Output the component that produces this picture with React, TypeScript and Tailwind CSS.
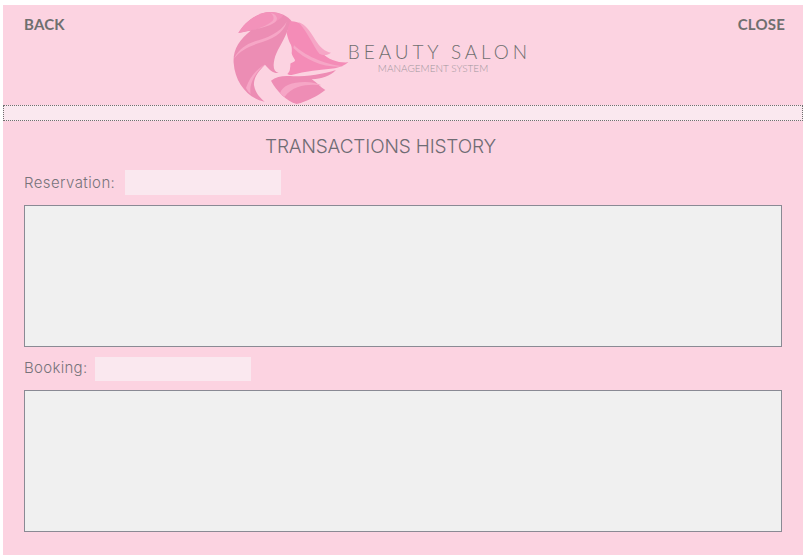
import React from 'react'

const font = { fontFamily: '"Inter", "Liberation Sans", sans-serif' }
const lato = { fontFamily: '"Lato", "Liberation Sans", sans-serif' }

// Logo drawing, woman's head with flowing hair
const SalonLogo: React.FC = () => (
  <svg width="125" height="100" viewBox="0 0 375 300" className="block shrink-0">
    {/* left side of the hair */}
    <path d="M25 75 C45 40 85 12 122 12 C150 12 175 25 185 40 L170 74 C160 100 138 130 133 155 C128 178 132 192 146 195 C128 196 118 185 105 170 C85 190 70 210 72 232 C76 255 90 270 104 281 C55 272 15 225 11 165 C8 125 28 95 62 68 C48 70 35 73 25 75 Z" fill="#ec8db4" />
    <path d="M25 75 C45 40 85 12 122 12 C135 12 150 16 160 22 C140 50 85 62 25 75 Z" fill="#f392ba" />
    <path d="M122 14 C136 18 146 28 138 40 C126 54 85 62 50 70 C85 62 114 52 128 38 C134 30 130 22 122 14 Z" fill="#f6a6c6" />
    <path d="M170 42 C150 75 110 90 75 100 C50 108 25 125 12 152 C30 128 55 116 85 106 C125 94 160 78 170 42 Z" fill="#f6a6c6" />
    <path d="M106 168 C82 182 60 205 48 240 C52 248 57 254 62 258 C58 238 64 205 106 168 Z" fill="#f6a6c6" />
    {/* right side, blown out */}
    <path d="M180 40 C200 38 222 48 236 70 C250 95 262 118 276 134 C295 155 325 165 355 163 C345 172 330 178 315 181 C270 186 225 190 185 201 C180 202 176 200 172 198 C178 192 180 188 180 181 C182 175 180 170 182 166 C190 162 196 160 195 156 C190 148 186 142 185 136 C186 128 186 118 183 111 C176 98 172 86 170 74 Z" fill="#f48cb7" />
    <path d="M205 42 C228 50 242 72 256 96 C270 118 285 131 303 134 C292 143 278 142 268 137 C250 115 235 75 205 42 Z" fill="#f6a6c6" />
    <path d="M192 112 C222 140 280 170 340 175 C290 181 230 160 190 120 Z" fill="#f6a6c6" />
    {/* lower curl */}
    <path d="M123 218 C140 204 165 202 190 205 C235 205 280 198 318 186 C300 205 275 212 245 214 C262 225 272 238 286 246 C262 265 232 280 200 288 C170 280 140 250 123 218 Z" fill="#ee8db5" />
    <path d="M150 256 C158 232 185 222 225 222 C245 222 262 226 275 232 C240 227 190 230 164 266 C158 264 154 260 150 256 Z" fill="#f6a6c6" />
  </svg>
)

const HistoryBox: React.FC = () => (
  <div className="h-[142px] w-[758px] border border-[#8a8a94] bg-[#f0f0f0]" />
)

export default function App() {
  return (
    <div className="h-[558px] w-[807px] overflow-hidden bg-white pl-[3px] pt-[5px]" style={font}>
      <div className="h-[550px] w-[800px] bg-[#fcd3e1]">
        {/* Header */}
        <div className="flex h-[100px] items-start pl-[21px] pr-[18px]" style={lato}>
          <span className="mt-[9px] text-[15px] font-bold leading-[20px] tracking-[0.2px] text-[#6f6f6f]">BACK</span>
          <div className="ml-[165px] mt-[3px] flex">
            <SalonLogo />
            <div className="ml-[-7px] mt-[33px] flex flex-col items-start">
              <span className="whitespace-nowrap text-[19px] font-light leading-[22px] tracking-[3.9px] text-[#6f6f6f]">BEAUTY SALON</span>
              <span className="ml-[30px] mt-[-1px] whitespace-nowrap text-[10px] font-light leading-[12px] text-[#9f979d]">MANAGEMENT SYSTEM</span>
            </div>
          </div>
          <span className="ml-auto mt-[9px] text-[15px] font-bold leading-[20px] tracking-[0.2px] text-[#6f6f6f]">CLOSE</span>
        </div>

        {/* Dotted strip */}
        <div className="h-[16px] border border-dotted border-[#6f6f6f] bg-[#fae8ef]" />

        <div className="pl-[21px]">
          <h1 className="ml-[241px] mt-[14px] mb-[-1px] whitespace-nowrap text-[19px] font-light leading-[24px] tracking-[-0.15px] text-[#6f6c74]">TRANSACTIONS HISTORY</h1>

          <div className="mt-[12px] flex h-[25px] items-center">
            <label className="mt-[1px] w-[101px] text-[15px] font-light tracking-[0.4px] text-[#77737b]">Reservation:</label>
            <div className="h-[25px] w-[156px] bg-[#fae8ef]" />
          </div>
          <div className="mt-[10px]">
            <HistoryBox />
          </div>

          <div className="mt-[10px] flex h-[24px] items-center">
            <label className="mt-[-1px] w-[71px] text-[15px] font-light tracking-[0.3px] text-[#77737b]">Booking:</label>
            <div className="h-[24px] w-[156px] bg-[#fae8ef]" />
          </div>
          <div className="mt-[9px]">
            <HistoryBox />
          </div>
        </div>
      </div>
    </div>
  )
}
